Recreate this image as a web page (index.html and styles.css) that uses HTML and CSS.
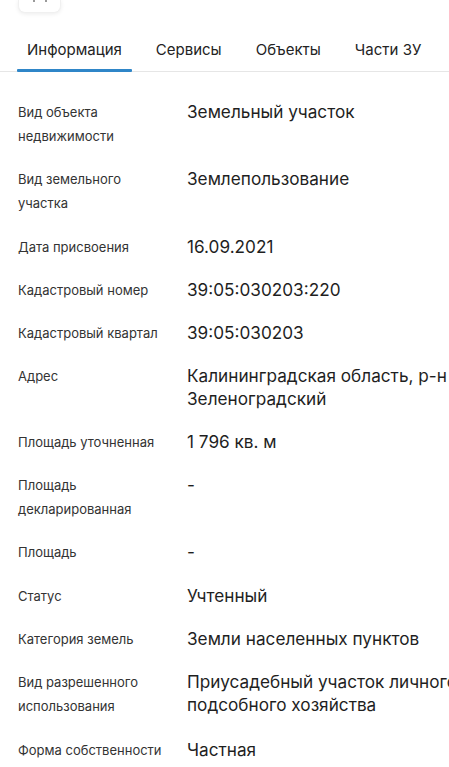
FILE: index.html
```html
<!DOCTYPE html>
<html lang="ru">
<head>
<meta charset="utf-8">
<title>Информация</title>
<link rel="stylesheet" href="styles.css">
</head>
<body>
<div class="page">
  <div class="top">
    <div class="top-btn"><span class="top-glyph"></span></div>
  </div>
  <nav class="tabs">
    <a class="tab active">Информация</a>
    <a class="tab">Сервисы</a>
    <a class="tab">Объекты</a>
    <a class="tab">Части ЗУ</a>
  </nav>
  <dl class="info">
    <div class="row"><dt>Вид объекта недвижимости</dt><dd>Земельный участок</dd></div>
    <div class="row"><dt>Вид земельного участка</dt><dd>Землепользование</dd></div>
    <div class="row"><dt>Дата присвоения</dt><dd>16.09.2021</dd></div>
    <div class="row"><dt>Кадастровый номер</dt><dd>39:05:030203:220</dd></div>
    <div class="row"><dt>Кадастровый квартал</dt><dd>39:05:030203</dd></div>
    <div class="row"><dt>Адрес</dt><dd>Калининградская область, р-н Зеленоградский</dd></div>
    <div class="row"><dt>Площадь уточненная</dt><dd>1 796 кв. м</dd></div>
    <div class="row"><dt>Площадь декларированная</dt><dd>-</dd></div>
    <div class="row"><dt>Площадь</dt><dd>-</dd></div>
    <div class="row"><dt>Статус</dt><dd>Учтенный</dd></div>
    <div class="row"><dt>Категория земель</dt><dd>Земли населенных пунктов</dd></div>
    <div class="row"><dt>Вид разрешенного использования</dt><dd>Приусадебный участок личного подсобного хозяйства</dd></div>
    <div class="row"><dt>Форма собственности</dt><dd>Частная</dd></div>
  </dl>
</div>
</body>
</html>
```
FILE: styles.css
```css
html, body {
  margin: 0;
  padding: 0;
  background: #ffffff;
}
body {
  overflow: hidden;
  font-family: Inter, "Noto Sans", sans-serif;
  color: #222222;
}
.page {
  width: 449px;
  overflow: hidden;
}
.top {
  height: 14px;
  padding-left: 18px;
}
.top-btn {
  width: 43px;
  height: 13px;
  background: #fff;
  border-radius: 0 0 7px 7px;
  box-shadow: 0 1px 4px rgba(0,0,0,0.08);
  border: 1px solid #f0f0f0;
  border-top: none;
  box-sizing: border-box;
  display: flex;
  justify-content: center;
}
.top-glyph {
  width: 14px;
  height: 2px;
  border-left: 2px solid #9a9a9a;
  border-right: 2px solid #9a9a9a;
  box-sizing: border-box;
}
.tabs {
  display: flex;
  align-items: stretch;
  margin-top: 22px;
  border-bottom: 1px solid #e6e6e6;
  padding-left: 17px;
  height: 35px;
}
.tab {
  font-size: 15px;
  color: #232323;
  padding: 0 10px;
  line-height: 28px;
  margin-right: 14px;
  white-space: nowrap;
  position: relative;
}
.tab.active::after {
  content: "";
  position: absolute;
  left: 0;
  right: 0;
  bottom: -1px;
  height: 3px;
  background: #2f86c8;
  border-radius: 1px;
}
.info {
  margin: 28px 0 0 0;
  width: 480px;
  display: flex;
  flex-direction: column;
  gap: 19.3px;
}
.row {
  display: grid;
  grid-template-columns: 150px 290px;
  column-gap: 19px;
  padding-left: 18px;
  align-items: start;
}
.row dt {
  font-size: 13px;
  line-height: 24px;
  color: #333333;
  margin: 0;
}
.row dd {
  margin: 0;
  font-size: 17.2px;
  line-height: 23px;
  color: #1f1f1f;
}
```
